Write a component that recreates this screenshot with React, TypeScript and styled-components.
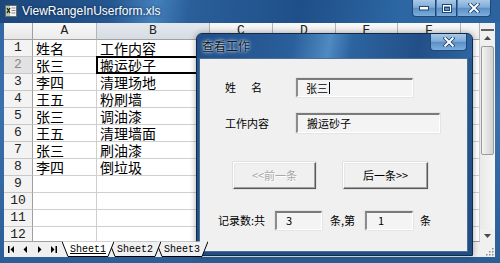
import React from 'react';
import styled, { createGlobalStyle } from 'styled-components';

const CJK = `"Noto Sans CJK SC", "Liberation Sans", sans-serif`;
const UI = `"Liberation Sans", "Noto Sans CJK SC", sans-serif`;
const MONO = `"Liberation Mono", "Noto Sans CJK SC", monospace`;

const GlobalStyle = createGlobalStyle`
  html, body { margin: 0; padding: 0; background: #fff; overflow: hidden; }
  * { box-sizing: border-box; }
`;

const Window = styled.div`
  position: relative;
  width: 500px;
  height: 263px;
  display: flex;
  flex-direction: column;
  padding-bottom: 6px;
  background: linear-gradient(180deg, #2f64a0 0%, #3a72ad 40%, #2b5d96 100%);
  overflow: hidden;
`;

const TitleBar = styled.div`
  height: 23px;
  flex: none;
  display: flex;
  align-items: flex-start;
  padding-left: 5px;
  background: linear-gradient(100deg, #1c477c 0%, #24568f 22%, #4380bb 31%, #2a5f9a 38%, #1f4f88 60%, #2c67a4 80%, #2a63a0 100%);
`;

const AppIcon = styled.div`
  width: 12px;
  height: 12px;
  margin-top: 5px;
  display: flex;
`;

const TitleText = styled.div`
  margin-left: 5px;
  margin-top: 4px;
  font: 12px/14px ${UI};
  color: #ffffff;
  text-shadow: 0 0 3px rgba(10, 30, 60, 0.9);
  white-space: nowrap;
`;

const CapButtons = styled.div`
  margin-left: auto;
  margin-right: 9px;
  display: flex;
  height: 17px;
`;

const CapButton = styled.div<{ $w: number }>`
  width: ${p => p.$w}px;
  height: 17px;
  display: flex;
  align-items: center;
  justify-content: center;
  background: linear-gradient(180deg, #a9c8e6 0%, #80acd8 45%, #5c8fc6 52%, #7cafdc 100%);
  border: 1px solid #1f4675;
  border-top: none;
  &:first-child { border-bottom-left-radius: 4px; }
  &:last-child { border-bottom-right-radius: 4px; }
  & + & { border-left: 1px solid #4a76a8; }
`;

const Main = styled.div`
  flex: 1;
  display: flex;
  padding: 0 5px 0 4px;
  min-height: 0;
`;

const SheetCol = styled.div`
  width: 476px;
  display: flex;
  flex-direction: column;
`;

const Sheet = styled.div`
  display: grid;
  grid-template-columns: 29px 64px 113px 63px 63px 62px 63px 19px;
  grid-template-rows: 17px repeat(12, 1fr);
  height: 218px;
  background: #fff;
  overflow: hidden;
`;

const Corner = styled.div`
  background: linear-gradient(180deg, #f6f6f6, #e6e6e6);
  border-right: 1px solid #a0a0a0;
  border-bottom: 1px solid #a0a0a0;
`;

const ColHead = styled.div<{ $active?: boolean }>`
  background: ${p => (p.$active ? 'linear-gradient(180deg, #e4e8ee, #d6dce4)' : 'linear-gradient(180deg, #f8f8f8, #ececec)')};
  border-right: 1px solid #b4b4b4;
  border-bottom: 1px solid #a0a0a0;
  font: 13px/16px ${MONO};
  color: #222;
  display: flex;
  align-items: center;
  justify-content: center;
`;

const RowHead = styled.div<{ $active?: boolean }>`
  background: ${p => (p.$active ? '#e2e2e2' : '#f3f3f3')};
  color: ${p => (p.$active ? '#8a8a8a' : '#222')};
  border-right: 1px solid #a0a0a0;
  border-bottom: 1px solid #c8c8c8;
  font: 13px/16px ${MONO};
  display: flex;
  align-items: center;
  justify-content: center;
`;

const Cell = styled.div<{ $selected?: boolean }>`
  position: relative;
  border-right: 1px solid #cfcfcf;
  border-bottom: 1px solid #cfcfcf;
  font: 14px/16px ${CJK};
  color: #000;
  padding-left: 3px;
  display: flex;
  align-items: center;
  white-space: nowrap;
  ${p =>
    p.$selected
      ? `&::after { content: ''; position: absolute; left: -1px; top: -1px; right: -1px; bottom: -1px; border: 2px solid #000; }`
      : ''}
`;

const TabBar = styled.div`
  height: 16px;
  flex: none;
  display: flex;
  background: #f0f0f0;
  border-top: 1px solid #a0a0a0;
`;

const NavGroup = styled.div`
  width: 58px;
  display: flex;
`;

const NavBtn = styled.div`
  width: 14px;
  display: flex;
  align-items: center;
  justify-content: center;
`;

const TabStrip = styled.div`
  display: flex;
  height: 100%;
`;

const Tab = styled.div<{ $active?: boolean; $z: number }>`
  position: relative;
  width: 52px;
  height: 100%;
  margin-right: -5px;
  z-index: ${p => p.$z};
  display: flex;
  align-items: center;
  padding-left: 8px;
  font: 10px/12px ${MONO};
  color: #000;
  text-decoration: ${p => (p.$active ? 'underline' : 'none')};
  span { position: relative; }
`;

const TabShape = styled.svg`
  position: absolute;
  left: 0;
  top: -1px;
`;

const ScrollCol = styled.div`
  width: 15px;
  display: flex;
  flex-direction: column;
  background: #f0f0f0;
`;

const SplitBox = styled.div`
  height: 8px;
  border-bottom: 2px solid #606060;
  margin: 0 1px;
`;

const ArrowBtn = styled.div`
  height: 14px;
  display: flex;
  align-items: center;
  justify-content: center;
`;

const Track = styled.div`
  flex: 1;
  display: flex;
  flex-direction: column;
  padding: 1px 1px 0;
  background: linear-gradient(90deg, #e9e9e9, #f6f6f6);
`;

const Thumb = styled.div`
  height: 109px;
  border: 1px solid #9a9a9a;
  border-radius: 2px;
  background: linear-gradient(90deg, #f4f4f4 0%, #e2e2e2 50%, #d2d2d2 100%);
`;

const Grip = styled.div`
  height: 14px;
  display: flex;
  align-items: flex-end;
  justify-content: flex-end;
  padding: 0 1px 1px 0;
`;

/* ---------- dialog ---------- */

const Dialog = styled.div`
  position: absolute;
  left: 196px;
  top: 33px;
  width: 277px;
  height: 223px;
  display: flex;
  flex-direction: column;
  background: linear-gradient(180deg, #275a94 0%, #1f4c82 100%);
  border: 1px solid #0f2a4d;
  border-radius: 6px 6px 0 0;
  padding: 0 4px 3px 2px;
  box-shadow: 0 0 6px rgba(0, 0, 0, 0.35);
`;

const DialogTitleBar = styled.div`
  height: 24px;
  flex: none;
  display: flex;
  align-items: flex-start;
  padding-left: 2px;
  background: linear-gradient(100deg, #214f87 0%, #2a5f9b 35%, #4f8ac2 48%, #2c64a0 56%, #234f88 80%, #2d65a1 100%);
  margin: 0 -4px 0 -2px;
  padding-right: 5px;
  border-radius: 5px 5px 0 0;
`;

const DialogTitle = styled.div`
  margin-top: 4px;
  margin-left: 3px;
  font: 12px/15px ${CJK};
  color: #0d1a2a;
  text-shadow: 0 0 4px #dfeaf6, 0 0 2px #dfeaf6;
`;

const DialogBody = styled.div`
  flex: 1;
  background: #f0f0f0;
  border: 1px solid #4c6f96;
  display: flex;
  flex-direction: column;
  padding-top: 19px;
`;

const FormRow = styled.div<{ $top?: number; $h: number; $left?: number; $gap?: number }>`
  display: flex;
  align-items: center;
  height: ${p => p.$h}px;
  margin-top: ${p => p.$top ?? 0}px;
  padding-left: ${p => p.$left ?? 0}px;
  gap: ${p => p.$gap ?? 0}px;
  flex: none;
`;

const Label = styled.div<{ $w?: number; $spacing?: number }>`
  width: ${p => (p.$w ? `${p.$w}px` : 'auto')};
  flex: none;
  font: 11px/13px ${CJK};
  color: #000;
  letter-spacing: ${p => p.$spacing ?? 0}px;
  white-space: nowrap;
`;

const TextBox = styled.div<{ $w: number; $h: number; $pad?: number; $alignTop?: boolean }>`
  width: ${p => p.$w}px;
  height: ${p => p.$h}px;
  flex: none;
  background: #f4f4f4;
  border-top: 2px solid #7a7a7a;
  border-left: 2px solid #8c8c8c;
  border-right: 1px solid #ffffff;
  border-bottom: 1px solid #ffffff;
  box-shadow: 0 0 0 0.5px #d8d8d8;
  padding-left: ${p => p.$pad ?? 8}px;
  display: flex;
  align-items: ${p => (p.$alignTop ? 'flex-start' : 'center')};
  padding-top: ${p => (p.$alignTop ? 1 : 0)}px;
  font: 11px/13px ${CJK};
  color: #000;
  white-space: nowrap;
`;

const Caret = styled.span`
  display: inline-block;
  width: 1px;
  height: 12px;
  background: #000;
  margin-left: 1px;
`;

const Button = styled.div<{ $w: number; $disabled?: boolean }>`
  width: ${p => p.$w}px;
  height: 27px;
  flex: none;
  display: flex;
  align-items: center;
  justify-content: center;
  background: #f0f0f0;
  border-top: 1px solid #ffffff;
  border-left: 1px solid #ffffff;
  border-right: 1px solid #5a5a5a;
  border-bottom: 1px solid #5a5a5a;
  box-shadow: inset -1px -1px 0 #a0a0a0, inset 1px 1px 0 #e8e8e8, 0 0 0 0.5px #d0d0d0;
  font: 11px/13px ${CJK};
  color: ${p => (p.$disabled ? '#a8a8a8' : '#000')};
  text-shadow: ${p => (p.$disabled ? '1px 1px 0 #ffffff' : 'none')};
  white-space: nowrap;
`;

const colLetters = ['A', 'B', 'C', 'D', 'E', 'F', ''];

const data: [string, string][] = [
  ['姓名', '工作内容'],
  ['张三', '搬运砂子'],
  ['李四', '清理场地'],
  ['王五', '粉刷墙'],
  ['张三', '调油漆'],
  ['王五', '清理墙面'],
  ['张三', '刷油漆'],
  ['李四', '倒垃圾'],
  ['', ''],
  ['', ''],
  ['', ''],
  ['', ''],
];

const CloseGlyph = ({ size = 9 }: { size?: number }) => (
  <svg width={size + 2} height={size} viewBox="0 0 11 9">
    <path d="M2 1 L9 8 M9 1 L2 8" stroke="#1c3d66" strokeWidth="3.2" strokeLinecap="square" />
    <path d="M2 1 L9 8 M9 1 L2 8" stroke="#ffffff" strokeWidth="1.8" strokeLinecap="square" />
  </svg>
);

const TabOutline = ({ active }: { active?: boolean }) => (
  <TabShape width="52" height="16" viewBox="0 0 52 16">
    <polygon points="0,0.5 52,0.5 46,15.5 6,15.5" fill={active ? '#ffffff' : '#f0f0f0'} />
    <polyline points="0,0.5 6,15.5 46,15.5 52,0.5" fill="none" stroke="#000" strokeWidth="1" />
  </TabShape>
);

export default function App() {
  return (
    <>
      <GlobalStyle />
      <Window>
        <TitleBar>
          <AppIcon>
            <svg width="12" height="12" viewBox="0 0 12 12">
              <rect x="0.5" y="0.5" width="11" height="11" fill="#f4f4f4" stroke="#6b6b6b" />
              <rect x="1" y="1" width="4" height="10" fill="#b7c9a8" />
              <path d="M2 3 L5 8 M5 3 L2 8" stroke="#1d1d1d" strokeWidth="1.3" />
              <path d="M6.5 3 H10.5 M6.5 5.5 H10.5 M6.5 8 H10.5" stroke="#8a8a8a" strokeWidth="1" />
            </svg>
          </AppIcon>
          <TitleText>ViewRangeInUserform.xls</TitleText>
          <CapButtons>
            <CapButton $w={24}>
              <svg width="10" height="5" viewBox="0 0 10 5">
                <rect x="0.5" y="0.5" width="9" height="3.5" fill="#fff" stroke="#23466f" />
              </svg>
            </CapButton>
            <CapButton $w={21}>
              <svg width="10" height="9" viewBox="0 0 10 9">
                <rect x="0.5" y="0.5" width="9" height="8" fill="none" stroke="#23466f" />
                <rect x="1.5" y="1.5" width="7" height="6" fill="none" stroke="#fff" />
                <rect x="2.5" y="3.5" width="5" height="3" fill="none" stroke="#23466f" />
              </svg>
            </CapButton>
            <CapButton $w={34}>
              <CloseGlyph size={10} />
            </CapButton>
          </CapButtons>
        </TitleBar>

        <Main>
          <SheetCol>
            <Sheet>
              <Corner />
              {colLetters.map((c, i) => (
                <ColHead key={i} $active={c === 'B'}>
                  {c}
                </ColHead>
              ))}
              {data.map((row, r) => (
                <React.Fragment key={r}>
                  <RowHead $active={r === 1}>{r + 1}</RowHead>
                  <Cell>{row[0]}</Cell>
                  <Cell $selected={r === 1}>{row[1]}</Cell>
                  <Cell />
                  <Cell />
                  <Cell />
                  <Cell />
                  <Cell />
                </React.Fragment>
              ))}
            </Sheet>
            <TabBar>
              <NavGroup>
                <NavBtn>
                  <svg width="7" height="7" viewBox="0 0 7 7">
                    <rect x="0" y="0" width="1.5" height="7" fill="#000" />
                    <polygon points="6,0 6,7 2.5,3.5" fill="#000" />
                  </svg>
                </NavBtn>
                <NavBtn>
                  <svg width="5" height="7" viewBox="0 0 5 7">
                    <polygon points="4,0 4,7 0.5,3.5" fill="#000" />
                  </svg>
                </NavBtn>
                <NavBtn>
                  <svg width="5" height="7" viewBox="0 0 5 7">
                    <polygon points="1,0 1,7 4.5,3.5" fill="#000" />
                  </svg>
                </NavBtn>
                <NavBtn>
                  <svg width="7" height="7" viewBox="0 0 7 7">
                    <polygon points="1,0 1,7 4.5,3.5" fill="#000" />
                    <rect x="5.5" y="0" width="1.5" height="7" fill="#000" />
                  </svg>
                </NavBtn>
              </NavGroup>
              <TabStrip>
                <Tab $active $z={3}>
                  <TabOutline active />
                  <span>Sheet1</span>
                </Tab>
                <Tab $z={2}>
                  <TabOutline />
                  <span>Sheet2</span>
                </Tab>
                <Tab $z={1}>
                  <TabOutline />
                  <span>Sheet3</span>
                </Tab>
              </TabStrip>
            </TabBar>
          </SheetCol>

          <ScrollCol>
            <SplitBox />
            <ArrowBtn>
              <svg width="7" height="4" viewBox="0 0 7 4">
                <polygon points="0,4 7,4 3.5,0" fill="#4a4a4a" />
              </svg>
            </ArrowBtn>
            <Track>
              <Thumb />
            </Track>
            <ArrowBtn>
              <svg width="7" height="4" viewBox="0 0 7 4">
                <polygon points="0,0 7,0 3.5,4" fill="#4a4a4a" />
              </svg>
            </ArrowBtn>
            <Grip>
              <svg width="10" height="10" viewBox="0 0 10 10">
                {[
                  [8, 2], [8, 5], [5, 5], [8, 8], [5, 8], [2, 8],
                ].map(([x, y], i) => (
                  <rect key={i} x={x} y={y} width="1.5" height="1.5" fill="#8a8a8a" />
                ))}
              </svg>
            </Grip>
          </ScrollCol>
        </Main>

        <Dialog>
          <DialogTitleBar>
            <DialogTitle>查看工作</DialogTitle>
            <CapButtons style={{ marginRight: 0 }}>
              <CapButton $w={37}>
                <CloseGlyph size={10} />
              </CapButton>
            </CapButtons>
          </DialogTitleBar>
          <DialogBody>
            <FormRow $h={19} $left={25}>
              <Label $w={71} $spacing={15}>姓名</Label>
              <TextBox $w={117} $h={19}>
                张三<Caret />
              </TextBox>
            </FormRow>
            <FormRow $top={16} $h={20} $left={25}>
              <Label $w={71}>工作内容</Label>
              <TextBox $w={144} $h={20} $pad={9}>
                搬运砂子
              </TextBox>
            </FormRow>
            <FormRow $top={29} $h={27} $left={33} $gap={27}>
              <Button $w={83} $disabled>
                &lt;&lt;前一条
              </Button>
              <Button $w={85}>后一条&gt;&gt;</Button>
            </FormRow>
            <FormRow $top={22} $h={19} $left={18}>
              <Label $w={57}>记录数:共</Label>
              <TextBox $w={47} $h={19} $pad={9} $alignTop>
                3
              </TextBox>
              <Label $w={35} style={{ marginLeft: 8 }}>条,第</Label>
              <TextBox $w={48} $h={19} $pad={11} $alignTop>
                1
              </TextBox>
              <Label style={{ marginLeft: 7 }}>条</Label>
            </FormRow>
          </DialogBody>
        </Dialog>
      </Window>
    </>
  );
}
